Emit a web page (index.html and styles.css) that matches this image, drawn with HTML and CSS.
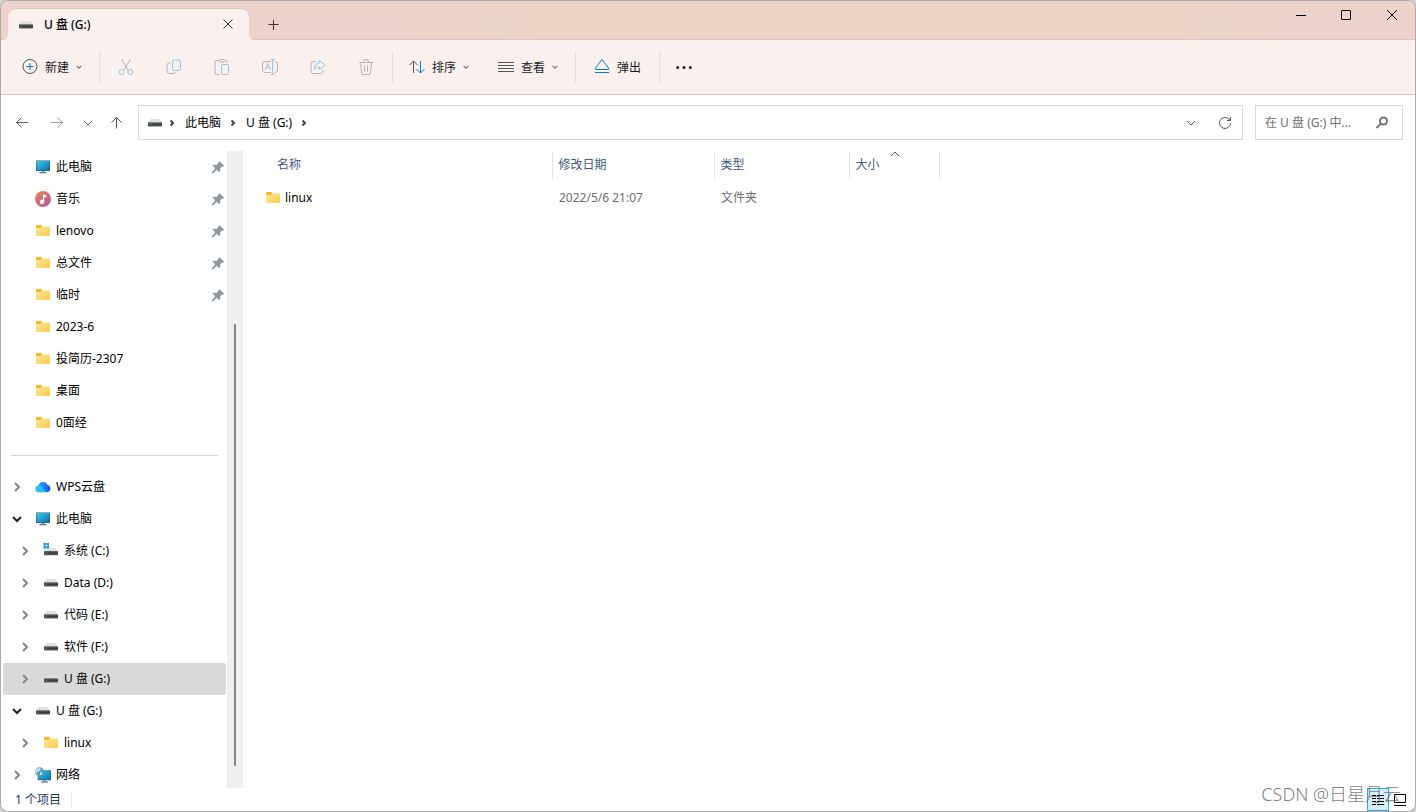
FILE: index.html
```html
<!DOCTYPE html>
<html lang="zh-CN">
<head>
<meta charset="utf-8">
<title>U 盘 (G:)</title>
<link rel="stylesheet" href="styles.css">
</head>
<body>
<svg class="sprite" aria-hidden="true">
  <defs>
    <linearGradient id="gFolder" x1="0" y1="0" x2="1" y2="1"><stop offset="0" stop-color="#ffe9a0"/><stop offset="1" stop-color="#ffcb44"/></linearGradient>
    <linearGradient id="gScreen" x1="0" y1="0" x2="1" y2="1"><stop offset="0" stop-color="#35d0e4"/><stop offset="1" stop-color="#1267b4"/></linearGradient>
    <linearGradient id="gMusic" x1="0" y1="0" x2="1" y2="1"><stop offset="0" stop-color="#ee8a4c"/><stop offset=".5" stop-color="#cf6c78"/><stop offset="1" stop-color="#a558b4"/></linearGradient>
    <linearGradient id="gCloud" x1="0" y1="0" x2="1" y2="0"><stop offset="0" stop-color="#25c3f5"/><stop offset=".5" stop-color="#1e8dfa"/><stop offset="1" stop-color="#1c4bec"/></linearGradient>
    <linearGradient id="gDrive" x1="0" y1="0" x2="0" y2="1"><stop offset="0" stop-color="#6a6a6a"/><stop offset=".5" stop-color="#383838"/><stop offset="1" stop-color="#666"/></linearGradient>
  </defs>
  <symbol id="folder" viewBox="0 0 16 16"><path d="M1 3q0-1 1-1h4l1.500 1.500H14q1 0 1 1V6H1z" fill="#f9dc8e"/><path d="M1 2.800q0-.8.8-.8H5.500q1.500 0 1.500 1.200T5.500 5H1z" fill="#fdb924"/><path d="M1 5h5l1.200-1H14q1 0 1 1V12q0 1-1 1H2q-1 0-1-1z" fill="url(#gFolder)"/></symbol>
  <symbol id="pc" viewBox="0 0 16 16"><rect x="1" y="1.500" width="14" height="10.500" rx=".5" fill="#34576b"/><rect x="1.500" y="2" width="13" height="9.500" fill="url(#gScreen)"/><path d="M6.500 12h3v1.500h-3z" fill="#8d9ba2"/><path d="M4.500 13.200h7v1h-7z" fill="#3f5663"/></symbol>
  <symbol id="music" viewBox="0 0 16 16"><circle cx="8" cy="8" r="8" fill="url(#gMusic)"/><path d="M8 3.200l3.300 1v2.200L9.300 5.900V10.800a2.200 2.200 0 1 1-1.300-2z" fill="#fff"/></symbol>
  <symbol id="drive" viewBox="0 0 16 16"><path d="M3.500 4h9L15 7.500H1z" fill="#dfe1e5"/><rect x="1" y="7.300" width="14" height="4.200" rx=".7" fill="url(#gDrive)"/><rect x="2.500" y="8.800" width="1.500" height="1.200" fill="#27b54a"/></symbol>
  <symbol id="sysdrive" viewBox="0 0 16 16"><path d="M4 5h8.500L15 8.500H1z" fill="#dfe1e5"/><path d="M.5 0h2.500v2.500H.5zM3.500 0H6v2.500H3.500zM.5 3h2.500v2.500H.5zM3.500 3H6v2.500H3.500z" fill="#1494e0"/><rect x="1" y="8" width="14" height="4.200" rx=".7" fill="url(#gDrive)"/><rect x="2.500" y="9.500" width="1.500" height="1.200" fill="#27b54a"/></symbol>
  <symbol id="cloud" viewBox="0 0 16 16"><path d="M3.500 13.300A3.500 3.500 0 0 1 3.300 6.500 4.900 4.900 0 0 1 12.500 6 3.700 3.700 0 0 1 12 13.300z" fill="url(#gCloud)"/><path d="M3.400 6.500c3 0 5 2.800 7.300 6.800H3.500A3.400 3.400 0 0 1 3.400 6.500z" fill="#2fd0f6" opacity=".7"/></symbol>
  <symbol id="network" viewBox="0 0 16 16"><rect x="3" y="3.500" width="13" height="9.500" fill="url(#gScreen)" stroke="#27617e" stroke-width=".5"/><path d="M8 13h3v1.500H8z" fill="#8d9ba2"/><path d="M6 14.500h7v1H6z" fill="#3f5663"/><circle cx="4.500" cy="4.500" r="4.300" fill="#5a9fc4"/><path d="M2 1.500q3-1 4 .5l-1.500 2-2 .5-1 2q-2-2 .5-5zM5 5.500l2.500-.5-1 3H5z" fill="#bfe3ee"/></symbol>
  <symbol id="pin" viewBox="0 0 16 16"><path d="M9.700 1.500l5.300 5-1.300 1.300-1.300-.2-2 2.200.3 2.700-1.400 1.200L6.500 11 2.500 15H1v-1.300L4.800 9.500 2 6.700l1.200-1.300 2.900.2 2.400-2.200-.2-1z" fill="#8c979f"/></symbol>
  <symbol id="right" viewBox="0 0 10 10"><path d="M3 1l4 4-4 4" class="stroke"/></symbol>
  <symbol id="down" viewBox="0 0 10 10"><path d="M1 3l4 4 4-4" class="stroke"/></symbol>
  <symbol id="crumb" viewBox="0 0 6 8"><path d="M1.500 1.500L4 4 1.500 6.500" class="stroke"/></symbol>
</svg>

<div class="window">
  <header class="titlebar">
    <div class="tab">
      <svg class="i16"><use href="#drive"/></svg>
      <span class="tab-title">U 盘 (G:)</span>
      <button class="plain tab-close" aria-label="关闭标签页"><svg class="i10" viewBox="0 0 10 10"><path d="M.5.5l9 9M9.500.5l-9 9" class="line"/></svg></button>
    </div>
    <button class="plain new-tab" aria-label="新标签页"><svg class="i10" viewBox="0 0 10 10"><path d="M4.500 0v10M-.5 4.500h10" class="line"/></svg></button>
    <div class="caption">
      <button class="plain" aria-label="最小化"><svg class="i10" viewBox="0 0 10 10"><path d="M1 5.500h10" class="line"/></svg></button>
      <button class="plain" aria-label="最大化"><svg class="i10" viewBox="0 0 10 10"><rect x=".5" y=".5" width="9" height="9" rx=".5" class="line"/></svg></button>
      <button class="plain" aria-label="关闭"><svg class="i10" viewBox="0 0 10 10"><path d="M0 0l10 10M10 0L0 10" class="line"/></svg></button>
    </div>
  </header>

  <div class="toolbar">
    <div class="group first">
      <button class="plain cmd"><svg class="i16" viewBox="0 0 16 16"><circle cx="8" cy="7.500" r="7" class="line"/><path d="M8 4v7M4.500 7.500h7" class="line blue"/></svg><span class="label">新建</span><svg class="caret"><use href="#down"/></svg></button>
    </div>
    <div class="group tools">
      <button class="plain tool" disabled aria-label="剪切"><svg class="i16" viewBox="0 0 16 16"><path d="M3.500 0l6.500 11M12.500 0L6 11" class="line"/><circle cx="3.700" cy="13" r="2.500" class="line blue"/><circle cx="12.300" cy="13" r="2.500" class="line blue"/></svg></button>
      <button class="plain tool" disabled aria-label="复制"><svg class="i16" viewBox="0 0 16 16"><path d="M4.500 4H3Q1 4 1 6v6q0 2.500 2.500 2.500H7q1.500 0 2-1.500" class="line"/><rect x="6.500" y="1" width="8" height="10.500" rx="2" class="line blue"/></svg></button>
      <button class="plain tool" disabled aria-label="粘贴"><svg class="i16" viewBox="0 0 16 16"><path d="M5 1.500H2.500Q1 1.500 1 3v11Q1 15.500 2.500 15.500H5M11 1.500h.5q1.500 0 1.500 1.500V4" class="line"/><rect x="4.500" y=".5" width="6" height="2.500" rx="1.200" class="line"/><rect x="7.500" y="5.500" width="7" height="10" rx="1" class="line blue"/></svg></button>
      <button class="plain tool" disabled aria-label="重命名"><svg class="i16" viewBox="0 0 16 16"><path d="M9 2.500H3q-2.500 0-2.500 2.500v6Q.5 13.500 3 13.500h6M12.500 2.500q3 0 3 2.500v6q0 2.500-3 2.500" class="line"/><path d="M3 11l2.700-6.500L8.400 11M4 8.800h3.500M8.500.5h4M10.500.5v15M8.500 15.500h4" class="line blue"/></svg></button>
      <button class="plain tool" disabled aria-label="共享"><svg class="i16" viewBox="0 0 16 16"><path d="M6 2.500H3.500Q1 2.500 1 5v7q0 2.500 2.500 2.500h7Q13 14.500 13 12v-1" class="line"/><path d="M9.500 1.500l5.500 4.500-5.500 4.500V8Q6 7.700 4 10.500 4.500 4.500 9.500 4z" class="line blue"/></svg></button>
      <button class="plain tool" disabled aria-label="删除"><svg class="i16" viewBox="0 0 16 16"><path d="M1 3.500h14M5.500 3q0-2.500 2.500-2.500T10.500 3M2.500 3.500l1 10.500q.2 1.500 1.500 1.500h6q1.300 0 1.500-1.500l1-10.500M6.500 6.500v6M9.500 6.500v6" class="line"/></svg></button>
    </div>
    <div class="group arrange">
      <button class="plain cmd"><svg class="i16" viewBox="0 0 16 16"><path d="M4.500 14V2M.5 6l4-4 4 4" class="line"/><path d="M11.500 2v12M7.500 10l4 4 4-4" class="line blue"/></svg><span class="label">排序</span><svg class="caret"><use href="#down"/></svg></button>
      <button class="plain cmd"><svg class="i16" viewBox="0 0 16 16"><path d="M0 3.500h16M0 6.500h16M0 9.500h16M0 12.500h16" class="line"/></svg><span class="label">查看</span><svg class="caret"><use href="#down"/></svg></button>
    </div>
    <div class="group eject">
      <button class="plain cmd"><svg class="i16" viewBox="0 0 16 16"><path d="M8 .5L1.300 9.200q-.6 1.300.5 1.300h12.400q1.100 0 .5-1.300zM1 13.500h14" class="line blue"/></svg><span class="label">弹出</span></button>
    </div>
    <button class="plain more" aria-label="查看更多"><svg class="i16" viewBox="0 0 16 16"><circle cx="1.700" cy="8.500" r="1.500"/><circle cx="8" cy="8.500" r="1.500"/><circle cx="14.300" cy="8.500" r="1.500"/></svg></button>
  </div>

  <nav class="navbar" aria-label="地址">
    <button class="plain" aria-label="后退"><svg class="i14" viewBox="0 0 14 14"><path d="M13 6.500H1.500M6.500 1.500l-5 5 5 5" class="line"/></svg></button>
    <button class="plain forward" aria-label="前进"><svg class="i14" viewBox="0 0 14 14"><path d="M1 6.500h11.500M7.500 1.500l5 5-5 5" class="line"/></svg></button>
    <button class="plain recent" aria-label="最近的位置"><svg class="i10"><use href="#down"/></svg></button>
    <button class="plain up" aria-label="向上"><svg class="i14" viewBox="0 0 14 14"><path d="M6.500 12.500V1.500M1.500 6.500l5-5 5 5" class="line"/></svg></button>
    <div class="address">
      <svg class="i16"><use href="#drive"/></svg>
      <svg class="crumb"><use href="#crumb"/></svg>
      <a href="#pc">此电脑</a>
      <svg class="crumb"><use href="#crumb"/></svg>
      <a href="#drive">U 盘 (G:)</a>
      <svg class="crumb"><use href="#crumb"/></svg>
      <button class="plain history" aria-label="历史记录"><svg class="i10"><use href="#down"/></svg></button>
      <button class="plain" aria-label="刷新"><svg class="i14" viewBox="0 0 14 14"><path d="M12.500 7A5.500 5.500 0 1 1 10.800 3L12.500 4.500M12.500 1v3.500H9" class="line"/></svg></button>
    </div>
    <label class="search">
      <input type="text" placeholder="在 U 盘 (G:) 中..." aria-label="搜索">
      <svg class="i14" viewBox="0 0 14 14"><circle cx="8.500" cy="5" r="3.500" fill="none" stroke="currentColor" stroke-width="2"/><path d="M6 7.500L1.500 12" fill="none" stroke="currentColor" stroke-width="2"/></svg>
    </label>
  </nav>

  <div class="body">
    <aside class="sidebar">
      <ul class="tree">
        <li class="row"><span class="twist"></span><svg class="i16"><use href="#pc"/></svg><span class="name">此电脑</span><svg class="pin"><use href="#pin"/></svg></li>
        <li class="row"><span class="twist"></span><svg class="i16"><use href="#music"/></svg><span class="name">音乐</span><svg class="pin"><use href="#pin"/></svg></li>
        <li class="row"><span class="twist"></span><svg class="i16"><use href="#folder"/></svg><span class="name">lenovo</span><svg class="pin"><use href="#pin"/></svg></li>
        <li class="row"><span class="twist"></span><svg class="i16"><use href="#folder"/></svg><span class="name">总文件</span><svg class="pin"><use href="#pin"/></svg></li>
        <li class="row"><span class="twist"></span><svg class="i16"><use href="#folder"/></svg><span class="name">临时</span><svg class="pin"><use href="#pin"/></svg></li>
        <li class="row"><span class="twist"></span><svg class="i16"><use href="#folder"/></svg><span class="name">2023-6</span></li>
        <li class="row"><span class="twist"></span><svg class="i16"><use href="#folder"/></svg><span class="name">投简历-2307</span></li>
        <li class="row"><span class="twist"></span><svg class="i16"><use href="#folder"/></svg><span class="name">桌面</span></li>
        <li class="row"><span class="twist"></span><svg class="i16"><use href="#folder"/></svg><span class="name">0面经</span></li>
      </ul>
      <hr class="divider">
      <ul class="tree">
        <li class="row"><span class="twist"><svg class="i10"><use href="#right"/></svg></span><svg class="i16"><use href="#cloud"/></svg><span class="name">WPS云盘</span></li>
        <li class="row"><span class="twist open"><svg class="i10"><use href="#down"/></svg></span><svg class="i16"><use href="#pc"/></svg><span class="name">此电脑</span></li>
        <li class="row child"><span class="twist"><svg class="i10"><use href="#right"/></svg></span><svg class="i16"><use href="#sysdrive"/></svg><span class="name">系统 (C:)</span></li>
        <li class="row child"><span class="twist"><svg class="i10"><use href="#right"/></svg></span><svg class="i16"><use href="#drive"/></svg><span class="name">Data (D:)</span></li>
        <li class="row child"><span class="twist"><svg class="i10"><use href="#right"/></svg></span><svg class="i16"><use href="#drive"/></svg><span class="name">代码 (E:)</span></li>
        <li class="row child"><span class="twist"><svg class="i10"><use href="#right"/></svg></span><svg class="i16"><use href="#drive"/></svg><span class="name">软件 (F:)</span></li>
        <li class="row child selected"><span class="twist"><svg class="i10"><use href="#right"/></svg></span><svg class="i16"><use href="#drive"/></svg><span class="name">U 盘 (G:)</span></li>
        <li class="row"><span class="twist open"><svg class="i10"><use href="#down"/></svg></span><svg class="i16"><use href="#drive"/></svg><span class="name">U 盘 (G:)</span></li>
        <li class="row child"><span class="twist"><svg class="i10"><use href="#right"/></svg></span><svg class="i16"><use href="#folder"/></svg><span class="name">linux</span></li>
        <li class="row"><span class="twist"><svg class="i10"><use href="#right"/></svg></span><svg class="i16"><use href="#network"/></svg><span class="name">网络</span></li>
      </ul>
    </aside>
    <div class="scrollbar"><div class="thumb"></div></div>
    <main class="files">
      <table>
        <colgroup><col class="c-name"><col class="c-date"><col class="c-type"><col class="c-size"></colgroup>
        <thead><tr><th scope="col">名称</th><th scope="col">修改日期</th><th scope="col">类型</th><th scope="col" class="sorted">大小<svg class="sort" viewBox="0 0 10 6"><path d="M1 5l4-4 4 4" class="line"/></svg></th></tr></thead>
        <tbody><tr><td><span class="file"><svg class="i16"><use href="#folder"/></svg>linux</span></td><td>2022/5/6 21:07</td><td>文件夹</td><td></td></tr></tbody>
      </table>
    </main>
  </div>

  <footer class="status">
    <span class="count">1 个项目</span>
    <div class="views">
      <button class="plain view active" aria-label="详细信息"><svg viewBox="0 0 14 12"><path d="M1 1.500h4M1 4.500h4M1 7.500h4M1 10.500h4M6 1.500h7M6 4.500h7M6 7.500h7M6 10.500h7" class="line"/></svg></button>
      <button class="plain view" aria-label="大图标"><svg viewBox="0 0 14 12"><path d="M1.500.5h11v8h-11zM1 11.500h12" class="line"/></svg></button>
    </div>
    <span class="watermark">CSDN @日星月云</span>
  </footer>
</div>
</body>
</html>
```
FILE: styles.css
```css
* { box-sizing: border-box; }
body {
  margin: 0;
  background: #d2d2d2;
  color: #000;
  font: 12px/16px "Noto Sans", "Noto Sans CJK SC", sans-serif;
}
ul { list-style: none; margin: 0; padding: 0; }
svg { display: block; flex: none; overflow: visible; }
.sprite { position: absolute; width: 0; height: 0; }
.line { fill: none; stroke: currentColor; stroke-width: 1; }
.stroke { fill: none; stroke: currentColor; }
.blue { color: #0078d4; }
.i10 { width: 10px; height: 10px; }
.i14 { width: 14px; height: 14px; }
.i16 { width: 16px; height: 16px; }
.plain {
  display: flex;
  align-items: center;
  justify-content: center;
  padding: 0;
  border: 0;
  background: none;
  color: inherit;
  font: inherit;
}

.window {
  display: flex;
  flex-direction: column;
  height: 100vh;
  border: 1px solid #ababab;
  border-radius: 8px;
  overflow: hidden;
  background: #fff;
}

/* Title bar */
.titlebar {
  display: flex;
  height: 39px;
  padding-left: 7px;
  border-bottom: 1px solid #dcc5bd;
  background: linear-gradient(90deg, #edd3cc 0, #edd3cb 28%, #edd4c6 40%, #edd4c6 82%, #edd3cc 92%);
}
.tab {
  position: relative;
  display: flex;
  align-items: center;
  width: 241px;
  height: 31px;
  margin-top: 8px;
  padding: 0 16px 0 10px;
  border-radius: 8px 8px 0 0;
  background: #faf1ee;
  box-shadow: 0 -1px 0 #e0c8c1;
}
.tab::before, .tab::after {
  content: "";
  position: absolute;
  bottom: 0;
  width: 4px;
  height: 4px;
}
.tab::before { right: 100%; background: radial-gradient(circle at 0 0, transparent 3px, #faf1ee 4px); }
.tab::after { left: 100%; background: radial-gradient(circle at 100% 0, transparent 3px, #faf1ee 4px); }
.tab-title { margin-left: 10px; font-weight: 500; }
.tab-close { margin-left: auto; padding-bottom: 2px; color: #333; }
.new-tab { width: 50px; height: 31px; margin-top: 8px; color: #333; }
.caption { display: flex; height: 28px; margin-left: auto; }
.caption .plain { width: 46px; }
.caption .line { color: #000; }

/* Command bar */
.toolbar {
  display: flex;
  align-items: center;
  height: 55px;
  border-bottom: 1px solid #dcc5bf;
  background: #faf1ee;
  color: #1b1b1b;
}
.group {
  display: flex;
  align-items: center;
  height: 32px;
  border-right: 1px solid #e6dedb;
}
.cmd { gap: 7px; }
.cmd .line { color: #555; }
.cmd .line.blue { color: #0078d4; }
.label { padding-top: 2px; }
.caret { width: 6px; height: 6px; color: #777; stroke-width: 2; }
.first { padding: 0 17px 0 21px; }
.tools { padding: 0 2px; }
.tool { width: 48px; height: 32px; color: #b9b2b0; }
.tool .blue { color: #95c4ea; }
.arrange { gap: 29px; padding: 0 17px 0 16px; }
.eject { padding: 0 18px; }
.more { width: 48px; height: 32px; fill: #1b1b1b; }

/* Navigation row */
.navbar {
  display: flex;
  align-items: center;
  padding: 10px 12px 11px 14px;
  color: #555;
}
.forward { margin-left: 21px; color: #999; }
.recent { margin-left: 19px; }
.up { margin-left: 17px; }
.address {
  display: flex;
  flex: 1;
  align-items: center;
  gap: 6px;
  height: 35px;
  margin-left: 14px;
  padding: 0 10px 0 8px;
  border: 1px solid #d9d9d9;
}
.address a { padding-right: 3px; color: #000; text-decoration: none; }
.crumb { width: 6px; height: 8px; margin-right: 4px; color: #444; stroke-width: 2; }
.history { margin: 0 16px 0 auto; }
.search {
  display: flex;
  align-items: center;
  width: 148px;
  height: 35px;
  margin-left: 12px;
  padding: 0 13px 0 9px;
  border: 1px solid #d9d9d9;
  color: #757575;
}
.search input {
  flex: 1;
  min-width: 0;
  padding: 0;
  border: 0;
  outline: 0;
  background: none;
  font: inherit;
}
.search input::placeholder { color: #6d6d6d; opacity: 1; }

/* Content */
.body { display: flex; flex: 1; min-height: 0; }
.sidebar { width: 226px; overflow: hidden; }
.row {
  display: flex;
  align-items: center;
  height: 32px;
  margin: 0 1px 0 2px;
  padding: 0 0 0 9px;
  border-radius: 2px;
}
.child { padding-left: 17px; }
.selected { background: #d9d9d9; }
.twist { width: 23px; color: #858585; stroke-width: 2; }
.open { color: #222; }
.name { margin-left: 5px; }
.pin { width: 14px; height: 14px; margin: 0 1px 0 auto; }
.divider { margin: 16px 9px 15px 10px; border: 0; border-top: 1px solid #d4d4d4; }
.scrollbar {
  display: flex;
  flex-direction: column;
  align-items: center;
  width: 16px;
  padding: 173px 0 22px;
  background: #efefef;
}
.thumb { flex: 1; width: 2px; border-radius: 1px; background: #858585; }
.files { flex: 1; margin-left: 2px; border-left: 1px solid #f5f5f5; }
table { width: 693px; table-layout: fixed; border-collapse: collapse; }
.c-name { width: 306px; }
.c-date { width: 162px; }
.c-type { width: 135px; }
.c-size { width: 90px; }
th {
  height: 28px;
  padding: 0 6px;
  border-right: 1px solid #e2e2e2;
  color: #44597a;
  font-weight: 400;
  text-align: left;
}
th:first-child { padding-left: 31px; }
td { height: 38px; padding: 0 7px; color: #6d6d6d; }
td:first-child { padding-left: 19px; color: #000; }
.file { display: flex; align-items: center; gap: 4px; }
.sorted { position: relative; }
.sort { position: absolute; top: 0; left: 40px; width: 10px; height: 6px; color: #555; }

/* Status bar */
.status {
  position: relative;
  display: flex;
  align-items: center;
  height: 23px;
  padding: 0 4px 0 14px;
  color: #1e395b;
}
.count { padding-right: 10px; border-right: 1px solid #f0f0f0; }
.views { display: flex; margin-left: auto; color: #000; }
.view { width: 22px; height: 23px; }
.view svg { width: 14px; height: 12px; }
.active { border: 1px solid #30a9e0; background: #d5edfb; }
.watermark {
  position: absolute;
  right: 14px;
  bottom: 5px;
  color: rgba(90, 90, 90, .8);
  font: 300 18px/24px "Noto Sans", "Noto Sans CJK SC", sans-serif;
}
```
